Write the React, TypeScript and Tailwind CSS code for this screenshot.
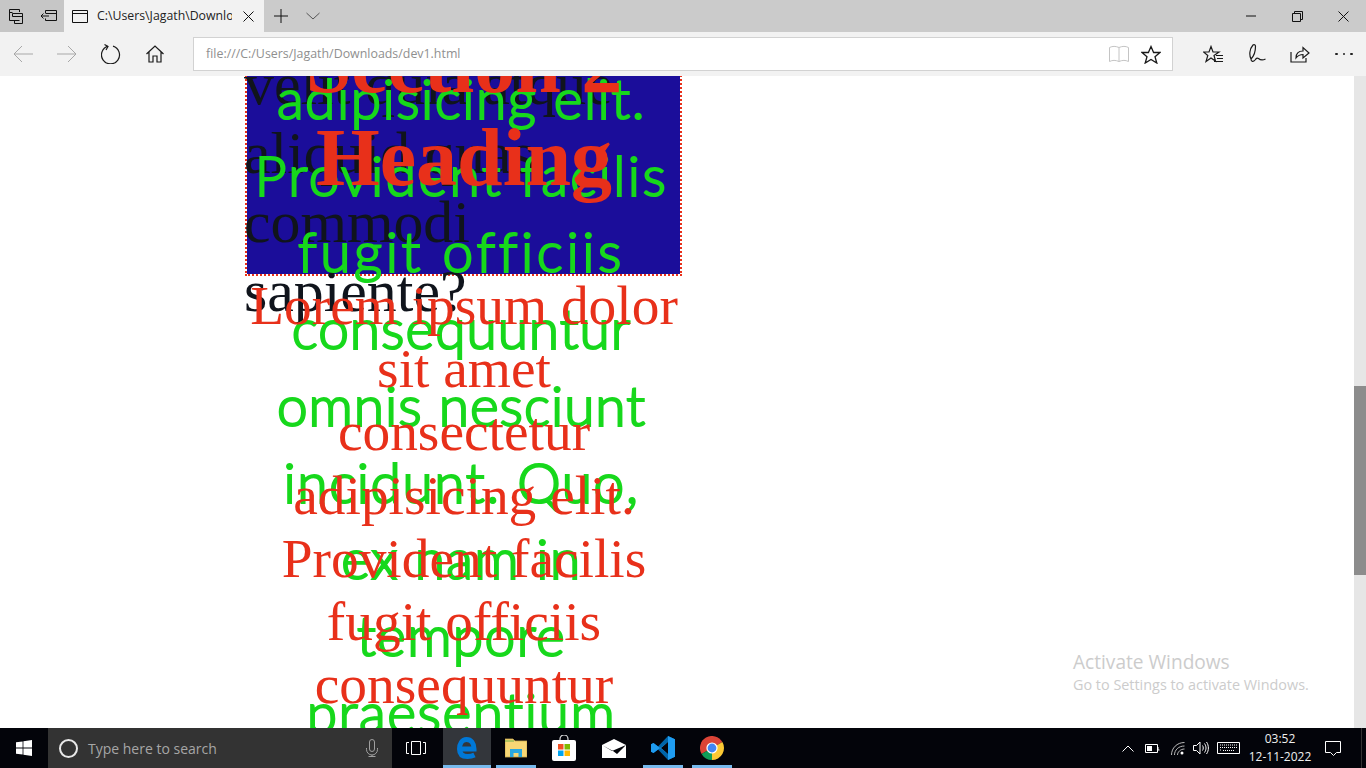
import React from 'react';

const ui = "font-['Open_Sans','Noto_Sans',sans-serif]";

const blackLines = ['velit quia atque', 'aliquid quas', 'commodi', 'sapiente?'];
const greenLines = [
  { text: 'adipisicing elit.', cls: 'tracking-[1.5px]' },
  { text: 'Provident facilis', cls: 'tracking-[2.4px]' },
  { text: 'fugit officiis', cls: 'tracking-[3.6px]' },
  { text: 'consequuntur', cls: 'tracking-[1px]' },
  { text: 'omnis nesciunt', cls: 'tracking-[1px]' },
  { text: 'incidunt. Quo,', cls: 'tracking-[1.6px]' },
  { text: 'ex nam in', cls: 'tracking-[1.4px]' },
  { text: 'tempore', cls: 'tracking-[1.4px]' },
  { text: 'praesentium', cls: 'tracking-[1.6px]' },
];
const redLines = ['Lorem ipsum dolor', 'sit amet', 'consectetur', 'adipisicing elit.', 'Provident facilis', 'fugit officiis', 'consequuntur'];

const Ico = ({ w, h, children, className = '' }: { w: number; h: number; children: React.ReactNode; className?: string }) => (
  <svg width={w} height={h} viewBox={`0 0 ${w} ${h}`} fill="none" stroke="currentColor" strokeWidth="1" className={`block shrink-0 ${className}`}>
    {children}
  </svg>
);

const TabBar = () => (
  <div className="flex h-8 shrink-0 items-center bg-[#cbcbcb] text-[#111]">
    <div className="flex h-8 w-16 items-center bg-[#c6c6c6] pl-[9px]">
      <Ico w={15} h={15}>
        <path d="M.5 4V.5h10V3M.5 3.5h3M3.5 4.5h10v10h-8v-3M3.5 4.5v3M.5 4v7.5h10M3.5 7.5h10" />
      </Ico>
      <Ico w={17} h={12} className="ml-4">
        <path d="M5.5 3.5V.5h11v10h-11v-2M1 6h8M3.5 3.5 1 6l2.5 2.5M6 3.5h10" />
      </Ico>
    </div>
    <div className="flex h-8 w-[200px] items-center bg-[#f2f2f2] pl-2">
      <Ico w={16} h={13}>
        <path d="M.5.5h15v12H.5zM.5 3.5h15" />
      </Ico>
      <div className={`ml-[9px] w-[135px] overflow-hidden whitespace-nowrap text-[12.3px] text-[#222] ${ui}`}>C:\Users\Jagath\Downloads\dev1.html</div>
      <Ico w={11} h={11} className="ml-[11px]">
        <path d="M.5.5l10 10M10.5.5l-10 10" />
      </Ico>
    </div>
    <Ico w={14} h={14} className="ml-[10px]">
      <path d="M7 0v14M0 7h14" />
    </Ico>
    <Ico w={14} h={8} className="ml-[18px] text-[#555]">
      <path d="M.5 1 7 7l6.5-6" />
    </Ico>
    <div className="ml-auto flex items-center">
      <Ico w={10} h={2} className="mr-[36px]"><path d="M0 1h10" /></Ico>
      <Ico w={11} h={11} className="mr-[35px]"><path d="M.5 2.5h8v8h-8zM2.5 2.5v-2h8v8h-2" /></Ico>
      <Ico w={11} h={11} className="mr-[17px]"><path d="M.5.5l10 10M10.5.5l-10 10" /></Ico>
    </div>
  </div>
);

const ToolBar = () => (
  <div className="flex h-11 shrink-0 items-center bg-[#f2f2f2] text-[#1a1a1a]">
    <Ico w={20} h={18} className="ml-[13px] text-[#a8a8a8]"><path d="M20 9H1M9 1 1 9l8 8" /></Ico>
    <Ico w={20} h={18} className="ml-[24px] text-[#a8a8a8]"><path d="M0 9h19M11 1l8 8-8 8" /></Ico>
    <Ico w={20} h={20} className="ml-[24px]"><path d="M7 2.2a9 9 0 1 0 5 0M3.5 .5 7 2.5 5 6" strokeWidth="1.2" /></Ico>
    <Ico w={18} h={18} className="ml-[25px]"><path d="M.5 9 9 1l8.5 8M3 7v10h4v-6h4v6h4V7" strokeWidth="1.2" /></Ico>
    <div className="ml-[29px] flex h-[34px] w-[980px] items-center border border-[#d2d2d2] bg-white">
      <div className={`ml-3 text-[12.4px] text-[#8f8f8f] ${ui}`}>file:///C:/Users/Jagath/Downloads/dev1.html</div>
      <Ico w={20} h={18} className="ml-auto text-[#c4c4c4]"><path d="M.5 2.5c3-1.5 6-1.5 9.5 0v14c-3.5-1.5-6.5-1.5-9.5 0zM10 2.5c3.5-1.5 6.5-1.5 9.5 0v14c-3-1.5-6-1.5-9.5 0" /></Ico>
      <Ico w={20} h={19} className="ml-[12px] mr-[11px]"><path d="M10 1.5l2.6 6h6.4l-5 4.2 1.8 6.3-5.8-3.6-5.8 3.6 1.8-6.3-5-4.2h6.4z" strokeWidth="1.3" /></Ico>
    </div>
    <Ico w={20} h={19} className="ml-[30px]"><path d="M8 1.5 10 7h6L11 10.5 12.5 16 8 13l-5 3.5 1.8-6L.5 7h5.5zM13 10.5h7M14 13.5h6M11 16.5h9" strokeWidth="1.2" /></Ico>
    <Ico w={18} h={20} className="ml-[25px]"><path d="M3 15C1 11 1.5 5 5 1c1-.8 2.5-.3 2.5 1.5C7.5 7 6 12 3 15zM3 15c0 3 2.5 3 4 1 1-1.5 2-2.5 3.5-1.5 2 1.8 4 2 7 .5" strokeWidth="1.2" /></Ico>
    <Ico w={20} h={18} className="ml-[24px]"><path d="M1 7v10h15v-4M6 13c0-5 3-7 7-7V2.5l6 5.5-6 5v-3.500c-3 0-5 1-7 3.500z" strokeWidth="1.2" /></Ico>
    <div className="ml-[25px] flex gap-[5px]">
      <div className="h-[2.5px] w-[2.5px] rounded-full bg-[#222]" />
      <div className="h-[2.5px] w-[2.5px] rounded-full bg-[#222]" />
      <div className="h-[2.5px] w-[2.5px] rounded-full bg-[#222]" />
    </div>
  </div>
);

const Page = () => (
  <main className="relative flex min-h-0 flex-1 overflow-hidden bg-white">
    <div className="ml-[246px] grid w-[436px] grid-cols-1 items-start">
      {/* blue box background */}
      <div className="col-start-1 row-start-1 ml-[-1px] mt-[-20px] h-[220px] w-[437px] border-2 border-dotted border-[#e8301a] bg-[#1b0d9a] bg-clip-padding" />
      {/* paragraph behind the box text */}
      <div className="col-start-1 row-start-1 ml-[-2px] mt-[-26px] font-['Liberation_Serif',serif] text-[59.8px] leading-[69px] whitespace-nowrap text-[#10141c]">
        {blackLines.map(l => <div key={l}>{l}</div>)}
      </div>
      <div className="col-start-1 row-start-1 mt-[-16px] pr-[5px] text-center font-['Lato',sans-serif] text-[55px] leading-[76.7px] font-light whitespace-nowrap text-[#17d81c] [-webkit-text-stroke:2.2px_#17d81c]">
        {greenLines.map(l => <div key={l.text} className={l.cls}>{l.text}</div>)}
      </div>
      <div className="col-start-1 row-start-1 mt-[-58px] text-center font-['Liberation_Serif',serif] text-[82px] leading-[93px] font-bold whitespace-nowrap text-[#e8301a]">
        <div>Section 2</div>
        <div>Heading</div>
      </div>
      <div className="col-start-1 row-start-1 mt-[198px] text-center font-['Liberation_Serif',serif] text-[55.4px] leading-[63.2px] whitespace-nowrap text-[#e8301a]">
        {redLines.map(l => <div key={l}>{l}</div>)}
      </div>
    </div>
    <div className={`absolute bottom-[33px] left-[1073px] text-[#cccccc] ${ui}`}>
      <div className="text-[19.1px] leading-[26px]">Activate Windows</div>
      <div className="text-[14.4px] leading-[20px]">Go to Settings to activate Windows.</div>
    </div>
    <div className="ml-auto w-3 bg-[#e6e6e6] pt-[310px]">
      <div className="h-[189px] bg-[#8c8c8c]" />
    </div>
  </main>
);

const ChromeIcon = () => (
  <svg width="24" height="24" viewBox="0 0 24 24" className="block">
    <path d="M12 12 1.6 18A12 12 0 0 1 22.39 6z" fill="#db4437" />
    <path d="M12 12 12 24A12 12 0 0 1 1.6 18z" fill="#0f9d58" />
    <path d="M12 12 22.39 6A12 12 0 0 1 12 24z" fill="#fcc934" />
    <circle cx="12" cy="12" r="5.6" fill="#fff" />
    <circle cx="12" cy="12" r="4.4" fill="#4285f4" />
  </svg>
);

const Slot = ({ w, active, on, children }: { w: string; active?: boolean; on?: boolean; children: React.ReactNode }) => (
  <div className={`relative flex h-10 items-center justify-center ${w} ${active ? 'bg-[#33363b]' : ''}`}>
    {children}
    {on && <div className="absolute inset-x-0 bottom-0 h-[3px] bg-[#76b9ed]" />}
  </div>
);

const TaskBar = () => (
  <footer className="flex h-10 shrink-0 items-center bg-[#03040a] text-white">
    <div className="flex h-10 w-12 items-center justify-center">
      <svg width="16" height="16" viewBox="0 0 16 16" className="block" fill="#fff">
        <path d="M0 2.3 6.6 1.4V7.5H0zM7.4 1.3 16 0v7.5H7.4zM0 8.4h6.6v6.2L0 13.7zM7.4 8.4H16V16l-8.6-1.3z" />
      </svg>
    </div>
    <div className="flex h-10 w-[344px] items-center bg-[#333333]">
      <div className="ml-[11px] h-[19px] w-[19px] rounded-full border-[2.5px] border-[#e8e8e8]" />
      <div className={`ml-[10px] text-[14px] text-[#a6a6a6] ${ui}`}>Type here to search</div>
      <Ico w={12} h={18} className="ml-auto mr-[14px] text-[#a0a0a0]">
        <path d="M3.5 3a2.5 2.5 0 0 1 5 0v7a2.5 2.5 0 0 1-5 0zM.5 9v1.5a5.5 5.5 0 0 0 11 0V9M6 16v1.5M2.5 17.5h7" />
      </Ico>
    </div>
    <div className="flex h-10 w-[51px] items-center justify-center pr-[3px]">
      <Ico w={20} h={14}>
        <path d="M5.5.5h9v13h-9zM3 1.5H.5v11H3M17 1.5h2.5v11H17" />
      </Ico>
    </div>
    <Slot w="w-[48px]" active on>
      <svg width="20" height="22" viewBox="0 0 20 22" className="block" fill="none" stroke="#0078d7" strokeWidth="5">
        <path d="M2.5 12h14.5c0-6-3-9.5-7.5-9.5S2.5 7 2.5 12s3 7.5 8 7.5c3 0 5-.5 7-1.5" />
      </svg>
    </Slot>
    <div className="w-[5px]" />
    <Slot w="w-[40px]" on>
      <svg width="22" height="20" viewBox="0 0 22 20" className="block">
        <path d="M0 1h8l2 2h12v16H0z" fill="#f8d775" stroke="#c9a94f" strokeWidth=".8" />
        <path d="M0 3h9" stroke="#6fb04a" strokeWidth="1" />
        <path d="M5 19v-8h12v8h-3.5v-4h-5v4z" fill="#29a8e0" />
      </svg>
    </Slot>
    <div className="flex w-[56px] justify-center">
      <svg width="24" height="26" viewBox="0 0 24 26" className="block">
        <path d="M8 7V4a4 4 0 0 1 8 0v3" fill="none" stroke="#ddd" strokeWidth="1.2" />
        <rect x="0" y="5" width="24" height="21" rx="2" fill="#fff" />
        <rect x="6" y="9" width="5.5" height="5.5" fill="#f25022" />
        <rect x="12.5" y="9" width="5.5" height="5.5" fill="#7fba00" />
        <rect x="6" y="15.5" width="5.5" height="5.5" fill="#00a4ef" />
        <rect x="12.5" y="15.5" width="5.5" height="5.5" fill="#ffb900" />
      </svg>
    </div>
    <div className="flex w-[44px] justify-center">
      <svg width="24" height="19" viewBox="0 0 24 19" className="block">
        <path d="M0 6 12 0l12 6v13H0z" fill="#fff" />
        <path d="M0 6l10 6 14-6-9 9-4-3z" fill="#03040a" />
      </svg>
    </div>
    <div className="w-[7px]" />
    <Slot w="w-[40px]" on>
      <svg width="24" height="24" viewBox="0 0 24 24" className="block">
        <path d="M17 0 24 3.3V20.7L17 24 7 13.5 2.5 17 0 15.8V8.2L2.5 7 7 10.5z" fill="#0065a9" />
        <path d="M17 0 24 3.3V20.7L17 24zM2.5 7 17 18V6L2.5 17 0 15.8V8.2z" fill="#1f9cf0" />
        <path d="M17 6v12l-7-6z" fill="#03040a" />
      </svg>
    </Slot>
    <div className="w-[9px]" />
    <Slot w="w-[40px]" on>
      <ChromeIcon />
    </Slot>
    <div className="ml-auto flex h-10 items-center">
      <Ico w={12} h={7}><path d="M.5 6.5 6 1l5.5 5.5" /></Ico>
      <Ico w={15} h={9} className="ml-[11px]"><path d="M.5.5h12v8h-12zM13 3v3h1.5" /><path d="M2 2h5v5H2z" fill="#fff" stroke="none" /></Ico>
      <Ico w={14} h={13} className="ml-[11px] text-[#bbb]"><path d="M.5 13C.5 6 6 .5 13.5.5M3.5 13c0-5 4-9 10-9M6.5 13c0-3 3-6 7-6" /><circle cx="11" cy="11" r="1.5" fill="#fff" stroke="none" /></Ico>
      <Ico w={16} h={14} className="ml-[8px]"><path d="M.5 4.5h3L7 1v12L3.500 9.500h-3zM9.500 4.500c1 1.500 1 3.500 0 5M11.500 2.500c2 3 2 6 0 9M13.500 1c2.500 3.500 2.500 8.500 0 12" /></Ico>
      <Ico w={23} h={12} className="ml-[8px]"><path d="M.5.5h22v11H.5z" /><path d="M3 3h17M3 5.5h17M3 8h1M6 8.500h11" strokeDasharray="1 1" /></Ico>
      <div className={`flex w-[80px] flex-col items-center text-[12px] leading-[18px] text-[#f0f0f0] ${ui}`}>
        <div>03:52</div>
        <div>12-11-2022</div>
      </div>
      <Ico w={16} h={15} className="ml-[5px]"><path d="M.5.5h15v11h-4l-3 3-3-3h-5z" /></Ico>
      <div className="ml-[20px] h-10 w-px bg-[#333]" />
      <div className="w-1" />
    </div>
  </footer>
);

export default function App() {
  return (
    <div className="flex h-screen w-[1366px] flex-col overflow-hidden">
      <TabBar />
      <ToolBar />
      <Page />
      <TaskBar />
    </div>
  );
}
